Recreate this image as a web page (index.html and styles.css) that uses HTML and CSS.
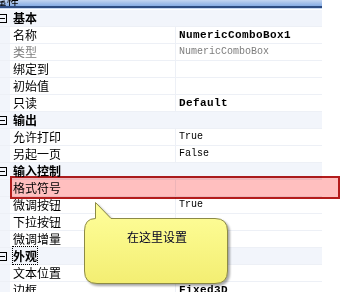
FILE: index.html
```html
<!doctype html>
<html lang="zh-CN">
<head>
  <meta charset="utf-8" />
  <title>属性</title>
  <link rel="stylesheet" href="styles.css">
</head>
<body>
  <div class="grid">
    <div class="titlebar"><span>属性</span></div>

    <div class="row cat"><span class="exp"></span><span class="name">基本</span></div>
    <div class="row"><span class="gut"></span><span class="name">名称</span><span class="val b">NumericComboBox1</span></div>
    <div class="row"><span class="gut"></span><span class="name gray">类型</span><span class="val gray">NumericComboBox</span></div>
    <div class="row"><span class="gut"></span><span class="name">绑定到</span><span class="val"></span></div>
    <div class="row"><span class="gut"></span><span class="name">初始值</span><span class="val"></span></div>
    <div class="row"><span class="gut"></span><span class="name">只读</span><span class="val b">Default</span></div>

    <div class="row cat"><span class="exp"></span><span class="name">输出</span></div>
    <div class="row"><span class="gut"></span><span class="name">允许打印</span><span class="val">True</span></div>
    <div class="row"><span class="gut"></span><span class="name">另起一页</span><span class="val">False</span></div>

    <div class="row cat"><span class="exp"></span><span class="name">输入控制</span></div>
    <div class="row"><span class="gut"></span><span class="name">格式符号</span><span class="val"></span></div>
    <div class="row"><span class="gut"></span><span class="name">微调按钮</span><span class="val">True</span></div>
    <div class="row"><span class="gut"></span><span class="name">下拉按钮</span><span class="val"></span></div>
    <div class="row"><span class="gut"></span><span class="name">微调增量</span><span class="val"></span></div>

    <div class="row cat"><span class="exp"></span><span class="name"><i class="focus">外观</i></span></div>
    <div class="row"><span class="gut"></span><span class="name">文本位置</span><span class="val"></span></div>
    <div class="row"><span class="gut"></span><span class="name">边框</span><span class="val b">Fixed3D</span></div>
  </div>

  <!-- overlays -->
  <div class="mark"></div>

  <div class="callout">
    <svg width="150" height="90" viewBox="0 0 150 90">
      <defs>
        <linearGradient id="yel" x1="0" y1="0" x2="0" y2="1">
          <stop offset="0" stop-color="#ffff9c"/>
          <stop offset="1" stop-color="#f3ee72"/>
        </linearGradient>
      </defs>
      <path d="M12.5,2.5 L28,18.5 L132,18.5 Q144.5,18.5 144.5,31 L144.5,71 Q144.5,83.5 132,83.5 L14,83.5 Q1.5,83.5 1.5,71 L1.5,31 Q1.5,18.5 12.5,18.5 Z"
            fill="url(#yel)" stroke="#8c8a46" stroke-width="1"/>
    </svg>
    <span class="callout-text">在这里设置</span>
  </div>
</body>
</html>
```

FILE: styles.css
```css
body { margin:0; background:#fff; font-family:"Noto Sans CJK SC", sans-serif; font-size:12px; color:#000; overflow:hidden; }
.grid { width:322px; background:#fff; }

.titlebar { height:6px; overflow:hidden; background:linear-gradient(#c3d5f1, #86ace4); border-bottom:2px solid #2d4c82; box-shadow:0 1px 0 #c9d9f1; margin-bottom:2px; }
.titlebar span { display:block; line-height:6px; margin-left:-5px; font-size:12px; }

.row { display:grid; grid-template-columns:10px 166px 1fr; height:17px; box-sizing:border-box; border-bottom:1px solid #edf0f6; line-height:16px; }
.gut { background:#f2f5fb; }
.name { padding-left:3px; border-right:1px solid #edf0f6; white-space:nowrap; }
.val { padding-left:3px; font-family:"Liberation Mono", monospace; font-size:10px; }
.val.b { font-weight:bold; font-size:11px; letter-spacing:0.4px; }
.gray { color:#7d7d7d; }

.cat { background:#f2f5fb; grid-template-columns:10px 1fr; }
.cat .name { font-weight:bold; border-right:none; }
.exp { position:relative; }
.exp::before { content:""; position:absolute; left:-2px; top:4px; width:8px; height:8px; border:1px solid #000; box-sizing:border-box; width:9px; height:9px; }
.exp::after { content:""; position:absolute; left:0; top:8px; width:5px; height:1px; background:#000; }
.focus { font-style:normal; outline:1px dotted #000; outline-offset:0; }

.mark { position:absolute; left:10px; top:176px; width:330px; height:23px; box-sizing:border-box; border:2px solid #b31c1c; background:#ffbfbf; mix-blend-mode:multiply; }

.callout { position:absolute; left:83px; top:200px; width:150px; height:90px; }
.callout svg { display:block; filter:drop-shadow(2px 2px 1px rgba(0,0,0,0.35)); }
.callout-text { position:absolute; left:44px; top:28px; line-height:17px; color:#000022; }
```
